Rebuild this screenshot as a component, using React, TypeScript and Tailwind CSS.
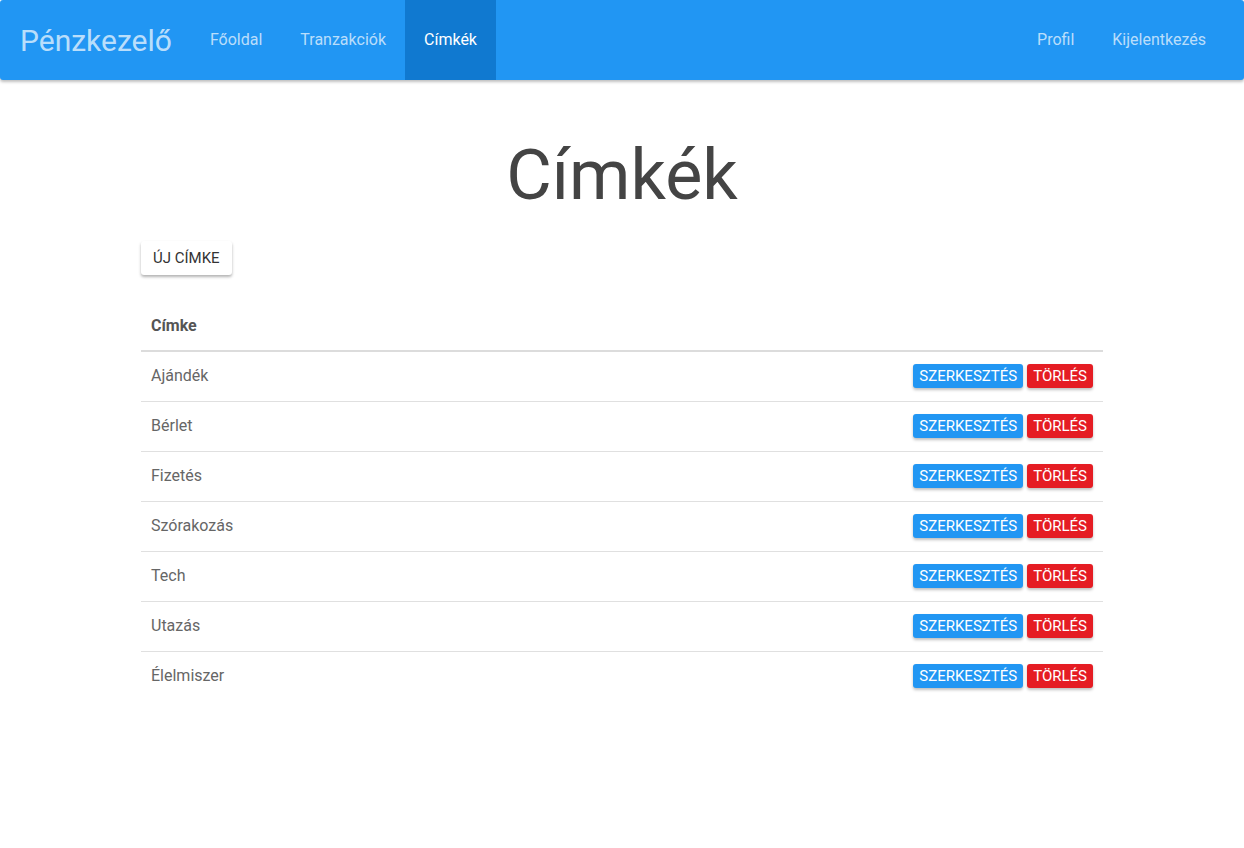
import React from "react";

const TAGS = ["Ajándék", "Bérlet", "Fizetés", "Szórakozás", "Tech", "Utazás", "Élelmiszer"];

const LEFT_LINKS = [
  { label: "Főoldal", active: false },
  { label: "Tranzakciók", active: false },
  { label: "Címkék", active: true },
];

export default function App() {
  return (
    <div className="min-h-[848px] bg-white font-['Roboto',sans-serif]">
      {/* Navbar */}
      <nav className="flex h-[80px] items-stretch rounded-[3px] bg-[#2196f3] pl-5 pr-[19px] shadow-[0_2px_3px_rgba(0,0,0,0.25)]">
        <a className="flex items-center pr-[19px] text-[30px] text-white/70">Pénzkezelő</a>
        {LEFT_LINKS.map((l) => (
          <a
            key={l.label}
            className={
              l.active
                ? "flex items-center bg-[#1079d0] px-[19px] text-[16px] text-white"
                : "flex items-center px-[19px] text-[16px] text-white/70"
            }
          >
            {l.label}
          </a>
        ))}
        <div className="flex-1" />
        <a className="flex items-center px-[19px] text-[16px] text-white/70">Profil</a>
        <a className="flex items-center px-[19px] text-[16px] text-white/70">Kijelentkezés</a>
      </nav>

      <main className="mx-auto w-[962px]">
        <h1 className="mt-[58px] text-center text-[70px] leading-[74px] text-[#444]">Címkék</h1>

        <button className="mt-[29px] h-[34px] rounded-[3px] bg-white px-3 text-[15px] text-[#333] shadow-[0_2px_3px_rgba(0,0,0,0.3)]">
          ÚJ CÍMKE
        </button>

        <table className="mt-[26px] w-full border-collapse text-[16px]">
          <thead>
            <tr className="border-b-2 border-[#dcdcdc]">
              <th className="h-[50px] px-[10px] text-left font-bold text-[#555]">Címke</th>
              <th />
            </tr>
          </thead>
          <tbody>
            {TAGS.map((t, i) => (
              <tr key={t} className={i < TAGS.length - 1 ? "border-b border-[#e0e0e0]" : ""}>
                <td className="h-[50px] px-[10px] text-[#666]">{t}</td>
                <td className="px-[10px] text-right">
                  <div className="inline-flex gap-1">
                    <button className="h-[24px] rounded-[3px] bg-[#2196f3] px-[6px] text-[15px] text-white shadow-[0_2px_3px_rgba(0,0,0,0.25)]">
                      SZERKESZTÉS
                    </button>
                    <button className="h-[24px] rounded-[3px] bg-[#e51c23] px-[6px] text-[15px] text-white shadow-[0_2px_3px_rgba(0,0,0,0.25)]">
                      TÖRLÉS
                    </button>
                  </div>
                </td>
              </tr>
            ))}
          </tbody>
        </table>
      </main>
    </div>
  );
}
